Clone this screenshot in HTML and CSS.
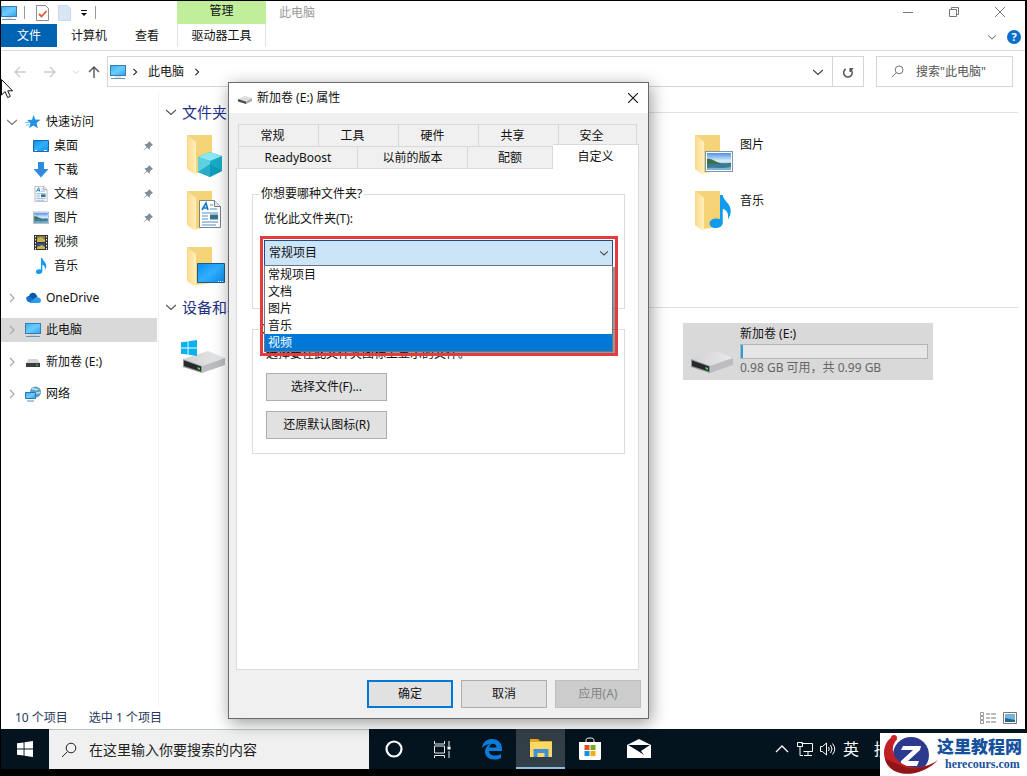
FILE: index.html
```html
<!DOCTYPE html>
<html lang="zh-CN">

<head>
    <meta charset="UTF-8">
    <meta name="viewport" content="width=device-width, initial-scale=1.0">
    <title>此电脑</title>
    <link rel="stylesheet" href="styles.css">
</head>

<body>
    <!-- shared icons -->
    <svg class="defs" width="0" height="0" aria-hidden="true">
        <defs>
            <linearGradient id="g-blue" x1="0" y1="0" x2="1" y2="1">
                <stop offset="0" stop-color="#35b4f5" />
                <stop offset=".5" stop-color="#6ccbff" />
                <stop offset="1" stop-color="#2fa2ee" />
            </linearGradient>
            <linearGradient id="g-desk" x1="0" y1="0" x2="1" y2="1">
                <stop offset="0" stop-color="#0a8df0" />
                <stop offset=".5" stop-color="#31b0ff" />
                <stop offset="1" stop-color="#0a8df0" />
            </linearGradient>
            <linearGradient id="g-fold" x1="0" y1="0" x2="1" y2="1">
                <stop offset="0" stop-color="#f3d583" />
                <stop offset="1" stop-color="#f7d36c" />
            </linearGradient>
            <linearGradient id="g-flap" x1="0" y1="0" x2="1" y2="0">
                <stop offset="0" stop-color="#fbd98a" />
                <stop offset="1" stop-color="#fff0bb" />
            </linearGradient>
            <linearGradient id="g-sky" x1="0" y1="0" x2="0" y2="1">
                <stop offset="0" stop-color="#4f8fe8" />
                <stop offset=".45" stop-color="#d4edfa" />
                <stop offset="1" stop-color="#5a9cc0" />
            </linearGradient>
            <linearGradient id="g-top" x1="0" y1="0" x2="1" y2="0">
                <stop offset="0" stop-color="#d2d2d4" />
                <stop offset="1" stop-color="#e9e9eb" />
            </linearGradient>
        </defs>
        <symbol id="pc" viewBox="0 0 16 16">
            <rect x=".5" y="1.5" width="15" height="10" fill="url(#g-blue)" stroke="#3b7ca8" />
            <path d="M5 13h6" stroke="#b9cbd6" />
            <path d="M1 14.5h14" stroke="#6f94ad" />
        </symbol>
        <symbol id="chev-r" viewBox="0 0 10 10">
            <path d="M3 1l4 4-4 4" fill="none" stroke="currentColor" stroke-width="1.3" />
        </symbol>
        <symbol id="chev-d" viewBox="0 0 10 10">
            <path d="M0 3l5 4.500L10 3" fill="none" stroke="currentColor" stroke-width="1.3" />
        </symbol>
        <symbol id="arrow" viewBox="0 0 14 14">
            <path d="M13 7H2M7 2L2 7l5 5" fill="none" stroke="currentColor" stroke-width="1.4" />
        </symbol>
        <symbol id="search" viewBox="0 0 16 16">
            <circle cx="10" cy="6" r="4.8" fill="none" stroke="currentColor" />
            <path d="M6.6 9.5L1 15" stroke="currentColor" />
        </symbol>
        <symbol id="pin" viewBox="0 0 12 12">
            <path d="M7 1l4 4-1.2.4L8 7.3l-.4 2.4L5.200 7.500 1 11l3.500-4.200L2.300 4.400l2.400-.4 1.900-1.800z" fill="#838d96" />
        </symbol>
        <symbol id="note" viewBox="0 0 16 24">
            <path d="M8 0h2c.5 4.500 5.800 6 5.800 11.500 0 2.500-.8 4.500-2 6.500.6-4-.4-7-3.800-8v10c0 2.500-2.200 4-5 4s-4.600-1.500-4.600-3.500S2.700 17 5.500 17c1 0 1.800.2 2.500.5z" fill="#0f9bf0" />
        </symbol>
        <symbol id="folder" viewBox="0 0 40 42">
            <path d="M1 1h25v36l-17 2z" fill="url(#g-fold)" />
            <path d="M1 1l8 6c1 .7 1 1.500 1 3v31l-2-1-6-4c-.8-.6-1-1-1-2z" fill="url(#g-flap)" />
        </symbol>
        <symbol id="photo" viewBox="0 0 28 22">
            <rect x=".5" y=".5" width="27" height="20" fill="#fff" stroke="#7f96a8" />
            <rect x="2" y="2" width="24" height="17" fill="url(#g-sky)" />
            <path d="M2 8c3-1 6 1 10 3s8 1 14 1v1H2z" fill="#3e7148" />
            <path d="M2 13h24v6H2z" fill="#3d789d" />
            <path d="M2 17c8-1 12 1 24-1v3H2z" fill="#80b4cc" />
        </symbol>
        <symbol id="doc" viewBox="0 0 22 28">
            <path d="M.5.5h15l6 6v21H.5z" fill="#fff" stroke="#7b8288" />
            <path d="M15.500.5v6h6" fill="#e3e8ec" stroke="#7b8288" />
            <path d="M3 10L7 3l2 7M4.500 8h4" fill="none" stroke="#1679c2" stroke-width="1.6" />
            <path d="M11 5h3M11 9h7M3 13h16M3 16h6M3 19h6M3 22h16M3 25h14" stroke="#4c90c4" />
            <path d="M11 14.500h8v5h-8z" fill="#36718f" />
        </symbol>
        <symbol id="drive" viewBox="0 0 42 22">
            <path d="M0 8L25 0l17 7-23 8z" fill="url(#g-top)" />
            <path d="M19 15l23-8v7l-23 8z" fill="#bcbdc0" />
            <path d="M0 8l19 7v7L0 16z" fill="#919396" />
            <path d="M1 9.500l17 6v5L1 15z" fill="#27292b" />
            <path d="M14.500 16l2.500 1v2l-2.500-1z" fill="#3fdc45" />
        </symbol>
        <symbol id="winlogo" viewBox="0 0 16 16">
            <path d="M0 2.300L6.600 1.400v6.100H0zM7.500 1.300L16 0v7.500H7.500zM0 8.400h6.600v6.200L0 13.700zM7.500 8.400H16V16l-8.500-1.300z" fill="currentColor" />
        </symbol>
    </svg>

    <main class="explorer">
        <header class="ribbon">
            <div class="ribbon-left">
                <div class="quick">
                    <svg class="i16"><use href="#pc" /></svg>
                    <i class="sep"></i>
                    <svg class="q-check" viewBox="0 0 13 16"><path d="M.5.5h9l3 3v12H.5z" fill="#fff" stroke="#8b8f94" /><path d="M3 9l2.500 2.500L10.500 6" fill="none" stroke="#e0572f" stroke-width="1.8" /></svg>
                    <svg class="q-doc" viewBox="0 0 13 16"><path d="M.5.5h9l3 3v12H.5z" fill="#d9e6f6" stroke="#c7d9ef" /></svg>
                    <svg class="q-caret" viewBox="0 0 8 8"><path d="M1 1.500h6" stroke="#111" /><path d="M1 4h6L4 7z" fill="#111" /></svg>
                    <i class="sep"></i>
                </div>
                <nav class="tabs">
                    <a class="tab file" href="#">文件</a>
                    <a class="tab" href="#">计算机</a>
                    <a class="tab" href="#">查看</a>
                </nav>
            </div>
            <div class="context">
                <div class="context-title">管理</div>
                <a class="context-tab" href="#">驱动器工具</a>
            </div>
            <div class="ribbon-right">
                <div class="caption">
                    <span class="caption-text">此电脑</span>
                    <button class="win-btn" aria-label="最小化"><svg viewBox="0 0 10 10"><path d="M0 5.500h10" stroke="#777" /></svg></button>
                    <button class="win-btn" aria-label="还原"><svg viewBox="0 0 10 10"><path d="M.5 2.500h7v7h-7zM2.500 2.500v-2h7v7h-2" fill="none" stroke="#777" /></svg></button>
                    <button class="win-btn" aria-label="关闭"><svg viewBox="0 0 10 10"><path d="M0 0l10 10M10 0L0 10" stroke="#777" /></svg></button>
                </div>
                <div class="ribbon-help">
                    <svg class="i8"><use href="#chev-d" /></svg>
                    <button class="help" aria-label="帮助">?</button>
                </div>
            </div>
        </header>

        <div class="address-row">
            <button class="nav-btn back" aria-label="后退"><svg><use href="#arrow" /></svg></button>
            <button class="nav-btn forward" aria-label="前进"><svg><use href="#arrow" /></svg></button>
            <button class="nav-btn recent" aria-label="最近"><svg><use href="#chev-d" /></svg></button>
            <button class="nav-btn up" aria-label="向上"><svg><use href="#arrow" /></svg></button>
            <div class="address">
                <svg class="i18"><use href="#pc" /></svg>
                <svg class="i8"><use href="#chev-r" /></svg>
                <span class="crumb">此电脑</span>
                <svg class="i8"><use href="#chev-r" /></svg>
                <svg class="drop"><use href="#chev-d" /></svg>
                <button class="refresh" aria-label="刷新"><svg viewBox="0 0 12 12"><path d="M8.300 3A4.300 4.300 0 1 1 3.200 3.500M3.800 6V2.800H.800" fill="none" stroke="#555" stroke-width="1.500" transform="matrix(-1 0 0 1 12 0)" /></svg></button>
            </div>
            <div class="search">
                <svg><use href="#search" /></svg>
                <input type="text" aria-label="搜索" placeholder="搜索&quot;此电脑&quot;">
            </div>
        </div>

        <div class="panes">
            <nav class="sidebar">
                <a class="node" href="#"><svg class="tw open"><use href="#chev-d" /></svg><svg class="ni" viewBox="0 0 16 16"><path d="M8.500 1l1.800 4.600 5.200.1-3.900 3.400 1.200 5.100-4.400-2.800-4.400 2.800 1.400-5L2 6l5-.3z" fill="#2192e6" /><path d="M0 8.500h4M1 11h3" stroke="#6fbcf3" /></svg>快速访问</a>
                <a class="node sub" href="#"><svg class="ni" viewBox="0 0 16 16"><path d="M.5 2.500h15v11H.5z" fill="url(#g-desk)" stroke="#1769a8" /><path d="M2 12.500h2M11 12.500h3" stroke="#fff" /></svg>桌面<svg class="pin"><use href="#pin" /></svg></a>
                <a class="node sub" href="#"><svg class="ni" viewBox="0 0 16 16"><path d="M5 0h6v7h4.500L8 15.500.5 7H5z" fill="#2f8be0" /></svg>下载<svg class="pin"><use href="#pin" /></svg></a>
                <a class="node sub" href="#"><svg class="ni"><use href="#doc" /></svg>文档<svg class="pin"><use href="#pin" /></svg></a>
                <a class="node sub" href="#"><svg class="ni"><use href="#photo" /></svg>图片<svg class="pin"><use href="#pin" /></svg></a>
                <a class="node sub" href="#"><svg class="ni" viewBox="0 0 16 16"><path d="M1 1h14v15H1z" fill="#333" /><path d="M4 2h8v6H4z" fill="#8b7e48" /><path d="M4 9h8v6H4z" fill="#3b4b8d" /><path d="M4 5l4-2 4 3v2H4zM4 13l5-2 3 2v2H4z" fill="#c9b648" /><path d="M2.500 2v14M13.500 2v14" stroke="#eee" stroke-dasharray="1.500 1.500" /></svg>视频</a>
                <a class="node sub" href="#"><svg class="ni"><use href="#note" /></svg>音乐</a>
                <a class="node top" href="#"><svg class="tw"><use href="#chev-r" /></svg><svg class="ni" viewBox="0 0 16 16"><path d="M4 6a4 4 0 0 1 7.500-1l1 2L7 10 1 8.500A3 3 0 0 1 4 6z" fill="#0a57a8" /><path d="M2 7.500a4 4 0 0 1 4-.5l6 5H3.500A3 3 0 0 1 2 7.500z" fill="#1273cf" /><path d="M4 13l7-5.500a3.500 3.500 0 0 1 5 3A2.700 2.700 0 0 1 13 13z" fill="#289bea" /></svg>OneDrive</a>
                <a class="node top current" href="#"><svg class="tw"><use href="#chev-r" /></svg><svg class="ni"><use href="#pc" /></svg>此电脑</a>
                <a class="node top" href="#"><svg class="tw"><use href="#chev-r" /></svg><svg class="ni" viewBox="0 0 16 16"><path d="M3.500 5h9L15 9H1z" fill="#d5d5d6" /><path d="M1 9h14v4H1z" fill="#393b3d" /><path d="M11 11h2" stroke="#45dc50" /></svg>新加卷 (E:)</a>
                <a class="node top" href="#"><svg class="tw"><use href="#chev-r" /></svg><svg class="ni" viewBox="0 0 16 16"><circle cx="10.500" cy="6" r="5.500" fill="#5b9fc5" /><path d="M7 3c3-1 3 2 6 0M9 8c2-2 4 0 6-2" stroke="#c3e3ef" fill="none" stroke-width="1.500" /><path d="M.5 6.500h10v6H.5z" fill="url(#g-blue)" stroke="#2878af" /><path d="M2 15h7" stroke="#5a8dac" /></svg>网络</a>
            </nav>

            <section class="content">
                <h2 class="group-title"><svg><use href="#chev-d" /></svg>文件夹</h2>
                <div class="tiles">
                    <div class="tile">
                        <div class="thumb">
                            <svg class="folder"><use href="#folder" /></svg>
                            <svg class="badge cube" viewBox="0 0 26 26"><path d="M13 0l12 4v15l-12 6L1 20V5z" fill="#18adc8" /><path d="M13 0l12 4-12 5L1 5z" fill="#8de7f2" /><path d="M1 5l12 4v16L1 20z" fill="#5ed1e1" /><path d="M1 20l12-8 12 7-12 6z" fill="#0593b5" opacity=".6" /></svg>
                        </div>
                    </div>
                    <div class="tile third">
                        <div class="thumb">
                            <svg class="folder"><use href="#folder" /></svg>
                            <svg class="badge photo"><use href="#photo" /></svg>
                        </div>
                        <div class="tile-text">图片</div>
                    </div>
                    <div class="tile">
                        <div class="thumb">
                            <svg class="folder"><use href="#folder" /></svg>
                            <svg class="badge doc"><use href="#doc" /></svg>
                        </div>
                    </div>
                    <div class="tile third">
                        <div class="thumb">
                            <svg class="folder"><use href="#folder" /></svg>
                            <svg class="badge music"><use href="#note" /></svg>
                        </div>
                        <div class="tile-text">音乐</div>
                    </div>
                    <div class="tile">
                        <div class="thumb">
                            <svg class="folder"><use href="#folder" /></svg>
                            <svg class="badge desk" viewBox="0 0 28 21"><path d="M.5.5h27v19H.5z" fill="url(#g-desk)" stroke="#1b5c8d" /><path d="M21 18.500h6" stroke="#fff" stroke-dasharray="1 1" /></svg>
                        </div>
                    </div>
                </div>
                <h2 class="group-title"><svg><use href="#chev-d" /></svg>设备和驱动器</h2>
                <div class="tiles">
                    <div class="tile">
                        <div class="thumb system">
                            <svg class="drive"><use href="#drive" /></svg>
                            <svg class="badge win"><use href="#winlogo" /></svg>
                        </div>
                    </div>
                    <div class="tile third selected">
                        <div class="thumb system">
                            <svg class="drive"><use href="#drive" /></svg>
                        </div>
                        <div class="tile-text volume">
                            <div>新加卷 (E:)</div>
                            <div class="usage"><div class="used" style="width: 1%"></div></div>
                            <div class="space">0.98 GB 可用，共 0.99 GB</div>
                        </div>
                    </div>
                </div>
            </section>
        </div>

        <footer class="status">
            <span>10 个项目</span>
            <span>选中 1 个项目</span>
            <div class="views">
                <svg viewBox="0 0 16 12"><path d="M.5.5h3v3h-3zM.5 4.500h3v3h-3zM.5 8.500h3v3h-3z" fill="none" stroke="#999" /><path d="M6 2h4M11 2h5M6 6h4M11 6h5M6 10h4M11 10h5" stroke="#777" /></svg>
                <svg class="large" viewBox="0 0 14 12"><path d="M.5.5h13v11H.5z" fill="#fff" stroke="#777" /><path d="M2 2h10v8H2z" fill="#71b4de" /><path d="M2 6l5 1 5 1v2H2z" fill="#286486" /></svg>
            </div>
        </footer>
    </main>

    <section class="dialog" role="dialog" aria-label="新加卷 (E:) 属性">
        <header class="dialog-title">
            <svg class="dialog-icon" viewBox="0 0 14 14"><path d="M0 8l7-3 7 2-6 3z" fill="#dcdcde" /><path d="M0 8l8 2.500V13L0 10.500z" fill="#4a4c4e" /><path d="M8 10.500L14 7v3l-6 3z" fill="#a9aaac" /></svg>
            <span>新加卷 (E:) 属性</span>
            <button class="dialog-close" aria-label="关闭"><svg viewBox="0 0 10 10"><path d="M0 0l10 10M10 0L0 10" stroke="#111" stroke-width="1.100" /></svg></button>
        </header>
        <div class="sheet">
            <div class="sheet-tabs">
                <button>常规</button>
                <button>工具</button>
                <button>硬件</button>
                <button>共享</button>
                <button>安全</button>
            </div>
            <div class="sheet-tabs second">
                <button>ReadyBoost</button>
                <button>以前的版本</button>
                <button>配额</button>
                <button class="active">自定义</button>
            </div>
            <div class="page">
                <fieldset class="group kind">
                    <legend>你想要哪种文件夹?</legend>
                    <div class="fields">
                        <label for="folder-type">优化此文件夹(T):</label>
                        <div class="combo">
                            <select id="folder-type">
                                <option>常规项目</option>
                                <option>文档</option>
                                <option>图片</option>
                                <option>音乐</option>
                                <option>视频</option>
                            </select>
                            <svg class="combo-arrow"><use href="#chev-d" /></svg>
                            <ul class="combo-list">
                                <li>常规项目</li>
                                <li>文档</li>
                                <li>图片</li>
                                <li>音乐</li>
                                <li class="hover">视频</li>
                            </ul>
                            <div class="highlight"></div>
                        </div>
                    </div>
                </fieldset>
                <fieldset class="group icons">
                    <legend>文件夹图标</legend>
                    <div class="fields">
                        <p>选择要在此文件夹图标上显示的文件。</p>
                        <button class="btn wide">选择文件(F)...</button>
                        <button class="btn wide">还原默认图标(R)</button>
                    </div>
                </fieldset>
            </div>
        </div>
        <footer class="dialog-actions">
            <button class="btn default">确定</button>
            <button class="btn">取消</button>
            <button class="btn" disabled>应用(A)</button>
        </footer>
    </section>

    <footer class="taskbar">
        <button class="start" aria-label="开始"><svg><use href="#winlogo" /></svg></button>
        <div class="task-search">
            <svg><use href="#search" /></svg>
            <input type="text" aria-label="搜索" placeholder="在这里输入你要搜索的内容">
        </div>
        <button class="task" aria-label="Cortana"><svg viewBox="0 0 24 24"><circle cx="12" cy="12" r="7.500" fill="none" stroke="#fff" stroke-width="2.200" /></svg></button>
        <button class="task" aria-label="任务视图"><svg viewBox="0 0 24 24"><path d="M3.500 4v3h10V4M3.500 9h10v7h-10zM3.500 21v-2.500h10V21M18 4v5M18 14v7" fill="none" stroke="#e8edf0" /><path d="M16.500 9.500h3v3h-3z" fill="#fff" /></svg></button>
        <button class="task" aria-label="Edge"><svg viewBox="0 0 24 24"><path d="M2 11C3 4.500 7 2 12.200 2 18.500 2 22 6.500 22 12v2H9c.2 3.200 2.800 4.500 6 4.500 2.200 0 4.200-.6 6-1.600v4c-2 1.200-4.300 1.600-6.700 1.600C8.500 22.500 5 19 5 14.500c0-3.600 2-6 5-7.500C7 7.500 4 8.500 2 11zm7.200-.5h7.300c0-2.500-1.400-3.700-3.500-3.700s-3.500 1.400-3.800 3.700z" fill="#0d7bd9" fill-rule="evenodd" /></svg></button>
        <button class="task running" aria-label="文件资源管理器"><svg viewBox="0 0 24 24"><path d="M1 3h8l2 2h12v16H1z" fill="#e4a81b" /><path d="M1 6h22v15H1z" fill="#fed766" /><path d="M4.500 21v-8h15v8h-4v-4h-7v4z" fill="#3f92d4" /></svg></button>
        <button class="task" aria-label="应用商店"><svg viewBox="0 0 24 24"><path d="M8 6V3.500C8 1.500 9.500 1 12 1s4 .5 4 2.500V6" fill="none" stroke="#fff" /><path d="M1 5h22v17l-1 1H2l-1-1z" fill="#fff" /><path d="M6.500 8h5v5h-5z" fill="#e64b26" /><path d="M12.500 8h5v5h-5z" fill="#75ac18" /><path d="M6.500 14h5v5h-5z" fill="#1192df" /><path d="M12.500 14h5v5h-5z" fill="#f3ad12" /></svg></button>
        <button class="task" aria-label="邮件"><svg viewBox="0 0 24 24"><path d="M0 8l12-6 12 6v13H0z" fill="#fff" /><path d="M1 8h22l-9 6 3 4-6-4z" fill="#04141f" /></svg></button>
        <div class="tray">
            <svg viewBox="0 0 16 16"><path d="M2 11l6-6 6 6" fill="none" stroke="#fff" stroke-width="1.300" /></svg>
            <svg viewBox="0 0 16 16"><path d="M4.500 2.500h11v8h-9M11 11v3M7 14.500h8M.5 1.500h5v4h-5zM3 6v8.500h3" fill="none" stroke="#fff" /></svg>
            <svg viewBox="0 0 16 16"><path d="M.5 5.500h2l4-3.500v12l-4-3.500h-2zM8.500 6q1.500 2 0 4M10.500 4q3 4 0 8M12.500 2.500q4.500 5.500 0 11" fill="none" stroke="#fff" /></svg>
            <span>英</span>
            <span>拼</span>
        </div>
    </footer>

    <svg class="cursor" viewBox="0 0 12 20"><path d="M.5.5v15.500l3.600-3.400 2.600 6 2.600-1.200-2.600-5.600h4.800z" fill="#fff" stroke="#111" /></svg>

    <div class="watermark">
        <svg viewBox="0 0 60 43">
            <circle cx="31" cy="22" r="18" fill="#2b3a8e" />
            <path d="M23 13h18l-1 4-12 11h11l-2 5H20l1-5 12-11H21z" fill="#fff" />
            <path d="M12 4C3 10 1 24 9 33c9 10 33 11 49-6-13 10-30 9-38 2C11 22 11 13 17 6z" fill="#c01f26" />
            <path d="M5 26c4 17 31 22 53 1-12 9-28 11-38 5-7-3-11-5-15-6z" fill="#8f1519" />
            <circle cx="14" cy="5" r="3" fill="#cc2228" />
        </svg>
        <div class="watermark-text">
            <strong>这里教程网</strong>
            <span>herecours.com</span>
        </div>
    </div>
</body>

</html>
```

FILE: styles.css
```css
* {
    box-sizing: border-box;
}

body {
    display: flex;
    flex-direction: column;
    position: relative;
    min-height: 100vh;
    margin: 0;
    padding: 1px 2px 7px 1px;
    background: #000;
    color: #111;
    font: 12px/18px "Noto Sans", "Noto Sans CJK SC", sans-serif;
}

a {
    color: inherit;
    text-decoration: none;
}

button,
input,
select {
    margin: 0;
    padding: 0;
    border: none;
    background: none;
    color: inherit;
    font: inherit;
}

button svg {
    display: block;
}

input::placeholder {
    color: inherit;
    opacity: 1;
}

.defs {
    position: absolute;
}

.explorer {
    display: flex;
    flex: 1;
    flex-direction: column;
    background: #fff;
}

/* ribbon */
.ribbon {
    display: flex;
    height: 50px;
    border-bottom: 1px solid #dadbdc;
}

.ribbon-left {
    width: 176px;
}

.quick {
    display: flex;
    align-items: center;
    gap: 11px;
    height: 23px;
}

.i16 {
    width: 16px;
    height: 16px;
    margin-right: -4px;
}

.sep {
    width: 1px;
    height: 13px;
    background: #999;
}

.q-check,
.q-doc {
    width: 13px;
    height: 16px;
    margin-right: -2px;
}

.q-caret {
    width: 8px;
    height: 8px;
    margin-right: -4px;
}

.tabs {
    display: flex;
    gap: 28px;
}

.tab {
    line-height: 24px;
}

.tab.file {
    width: 56px;
    height: 23px;
    margin-right: -14px;
    background: #0063b1;
    color: #fff;
    text-align: center;
}

.context {
    width: 89px;
    text-align: center;
}

.context-title {
    height: 23px;
    background: #c0ee9a;
    line-height: 20px;
}

.context-tab {
    display: block;
    height: 23px;
    border: 1px solid #e2e5e0;
    border-width: 0 1px;
    line-height: 24px;
}

.ribbon-right {
    flex: 1;
}

.caption {
    display: flex;
    height: 23px;
    padding: 0 2px 0 13px;
}

.caption-text {
    flex: 1;
    color: #999;
    line-height: 23px;
}

.win-btn {
    display: grid;
    place-items: center;
    width: 46px;
    height: 21px;
}

.win-btn svg,
.dialog-close svg {
    width: 10px;
    height: 10px;
}

.ribbon-help {
    display: flex;
    align-items: center;
    justify-content: flex-end;
    gap: 6px;
    height: 26px;
    padding-right: 4px;
    color: #888;
}

.help {
    width: 14px;
    height: 14px;
    border-radius: 50%;
    background: #0a6fcb;
    color: #fff;
    font-size: 11px;
    font-weight: bold;
    line-height: 14px;
}

/* address bar */
.address-row {
    display: flex;
    align-items: center;
    height: 41px;
    padding: 0 12px;
}

.nav-btn svg {
    width: 14px;
    height: 14px;
}

.back,
.forward {
    width: 30px;
    color: #ccc;
}

.forward svg {
    transform: rotate(180deg);
}

.recent {
    width: 14px;
    color: #ccc;
}

.recent svg {
    width: 6px;
    height: 6px;
}

.up {
    width: 20px;
    color: #555;
}

.up svg {
    transform: rotate(90deg);
}

.address {
    display: flex;
    flex: 1;
    align-items: center;
    height: 31px;
    padding-left: 2px;
    border: 1px solid #d5d5d5;
}

.i18 {
    width: 16px;
    height: 16px;
}

.i8 {
    width: 8px;
    height: 8px;
    margin: 0 5px;
}

.crumb {
    margin: 0 4px;
}

.drop {
    width: 10px;
    height: 10px;
    margin: 0 9px 0 auto;
    color: #444;
}

.refresh {
    display: grid;
    place-items: center;
    width: 31px;
    height: 29px;
    border-left: 1px solid #d5d5d5;
}

.refresh svg {
    width: 12px;
    height: 12px;
}

.search {
    display: flex;
    align-items: center;
    gap: 12px;
    width: 137px;
    height: 31px;
    margin-left: 12px;
    padding-left: 14px;
    border: 1px solid #d5d5d5;
    color: #555;
}

.search svg {
    width: 13px;
    height: 13px;
    flex: none;
}

.search input,
.task-search input {
    flex: 1;
    min-width: 0;
    outline: none;
}

/* navigation pane */
.panes {
    display: flex;
    flex: 1;
}

.sidebar {
    width: 158px;
    padding-top: 18px;
    border-right: 1px solid #f3f3f3;
}

.node {
    display: flex;
    align-items: center;
    width: 156px;
    height: 24px;
    padding-left: 6px;
}

.node.sub {
    padding-left: 32px;
}

.node.top {
    margin-top: 8px;
}

.node.current {
    background: #d9d9d9;
}

.tw {
    width: 10px;
    height: 10px;
    margin-right: 8px;
    color: #aaa;
}

.tw.open {
    color: #777;
}

.ni {
    width: 16px;
    height: 16px;
    margin-right: 5px;
}

.pin {
    width: 12px;
    height: 12px;
    margin: 0 3px 0 auto;
}

/* content pane */
.content {
    flex: 1;
    min-width: 0;
    padding: 10px 7px 0 7px;
}

.group-title {
    display: flex;
    align-items: center;
    margin: 0;
    color: #1e3287;
    font-size: 15px;
    font-weight: normal;
    line-height: 20px;
}

.group-title::after {
    content: "";
    flex: 1;
    height: 1px;
    margin-left: 8px;
    background: #e2e2e2;
}

.group-title svg {
    width: 10px;
    height: 10px;
    margin-right: 6px;
    color: #555;
}

.tiles {
    display: grid;
    grid-template-columns: repeat(3, 250px);
    column-gap: 4px;
    margin: 6px 0 1px 9px;
}

.tile {
    display: flex;
    grid-column: 1;
    height: 56px;
    padding-left: 8px;
}

.tile.third {
    grid-column: 3;
}

.tile.selected {
    height: 57px;
    background: #d9d9d9;
}

.thumb {
    position: relative;
    width: 49px;
    padding: 6px 0 0 3px;
}

.folder {
    width: 40px;
    height: 42px;
}

.badge {
    position: absolute;
}

.cube {
    left: 14px;
    top: 24px;
    width: 26px;
    height: 26px;
}

.badge.photo {
    left: 14px;
    top: 23px;
    width: 28px;
    height: 22px;
}

.badge.doc {
    left: 16px;
    top: 16px;
    width: 22px;
    height: 28px;
}

.badge.music {
    left: 18px;
    top: 11px;
    width: 22px;
    height: 33px;
}

.desk {
    left: 14px;
    top: 23px;
    width: 28px;
    height: 21px;
}

.thumb.system {
    padding: 28px 0 0 0;
}

.drive {
    width: 42px;
    height: 22px;
}

.badge.win {
    left: -2px;
    top: 17px;
    width: 16px;
    height: 16px;
    color: #08b1ef;
}

.tile-text {
    flex: 1;
    padding-top: 8px;
}

.volume {
    padding: 2px 5px 0 0;
}

.usage {
    height: 15px;
    margin-top: 1px;
    border: 1px solid #b5b5b5;
    background: #e6e6e6;
}

.used {
    height: 13px;
    min-width: 2px;
    background: #26a0da;
}

.space {
    color: #666;
}

.status {
    display: flex;
    align-items: center;
    gap: 21px;
    height: 23px;
    padding: 0 8px 0 14px;
    color: #25385c;
}

.views {
    display: flex;
    gap: 7px;
    margin-left: auto;
}

.views svg {
    width: 16px;
    height: 12px;
}

.views .large {
    width: 14px;
}

/* properties dialog */
.dialog {
    position: absolute;
    left: 228px;
    top: 82px;
    width: 421px;
    border: 1px solid #6a6a6a;
    background: #f0f0f0;
    box-shadow: 2px 4px 16px rgba(0, 0, 0, 0.4);
}

.dialog-title {
    display: flex;
    align-items: center;
    gap: 5px;
    height: 30px;
    padding-left: 9px;
    background: #fff;
}

.dialog-icon {
    width: 14px;
    height: 14px;
}

.dialog-close {
    display: grid;
    place-items: center;
    width: 30px;
    height: 30px;
    margin-left: auto;
}

.sheet {
    padding: 11px 9px 0 7px;
}

.sheet-tabs {
    display: grid;
    grid-template-columns: repeat(4, 80px) 1fr;
    margin: 0 2px;
    border-left: 1px solid #d9d9d9;
}

.sheet-tabs.second {
    grid-template-columns: 119px 110px 85px 1fr;
    margin-right: 0;
}

.sheet-tabs button {
    height: 22px;
    padding-right: 12px;
    border: 1px solid #d9d9d9;
    border-width: 1px 1px 0 0;
    line-height: 20px;
}

.sheet-tabs.second button {
    padding-right: 0;
}

.sheet-tabs .active {
    height: 25px;
    margin: -2px 0 -1px;
    background: #fff;
    z-index: 1;
}

.page {
    min-height: 502px;
    padding: 16px 13px 0 15px;
    border: 1px solid #dcdcdc;
    background: #fff;
}

.group {
    min-width: 0;
    margin: 0 0 11px;
    padding: 0;
    border: 1px solid #dcdcdc;
}

.group legend {
    margin-left: 6px;
    padding: 0 2px;
}

.fields {
    padding: 7px 11px 0;
}

.kind .fields {
    padding-bottom: 42px;
}

.icons .fields {
    display: flex;
    flex-direction: column;
    align-items: flex-start;
    gap: 10px;
    padding: 7px 13px 14px;
}

.fields label {
    display: block;
    margin-bottom: 12px;
}

.fields p {
    margin: 0;
}

.combo {
    position: relative;
}

.combo select {
    display: block;
    width: 100%;
    height: 26px;
    padding-left: 4px;
    border: 1px solid #1b4f7c;
    border-radius: 0;
    background: #cce4f7;
    appearance: none;
    outline: none;
}

.combo-arrow {
    position: absolute;
    right: 5px;
    top: 9px;
    width: 8px;
    height: 8px;
    color: #444;
}

.combo-list {
    position: absolute;
    left: 0;
    right: 0;
    top: 25px;
    margin: 0;
    padding: 0;
    border: 1px solid #6a7681;
    background: #fff;
    box-shadow: 2px 2px 1px rgba(0, 0, 0, 0.4);
    list-style: none;
}

.combo-list li {
    height: 17px;
    padding-left: 3px;
    line-height: 17px;
}

.combo-list .hover {
    background: #0078d7;
    color: #fff;
}

.highlight {
    position: absolute;
    inset: -4px -5px -90px -4px;
    border: 3px solid #e23c3f;
}

.btn {
    width: 86px;
    height: 28px;
    border: 1px solid #adadad;
    background: #e1e1e1;
}

.btn.wide {
    width: 121px;
}

.btn.default {
    border: 2px solid #0078d7;
}

.btn:disabled {
    border-color: #bfbfbf;
    background: #ccc;
    color: #838383;
}

.dialog-actions {
    display: flex;
    justify-content: flex-end;
    gap: 8px;
    padding: 10px 7px;
}

/* taskbar */
.taskbar {
    display: flex;
    height: 40px;
    background: #04141f;
    color: #fff;
}

.start {
    display: grid;
    place-items: center;
    width: 48px;
}

.start svg {
    width: 16px;
    height: 16px;
}

.task-search {
    display: flex;
    align-items: center;
    gap: 12px;
    width: 320px;
    padding-left: 12px;
    border-top: 1px solid #b9c4c0;
    background: #f0f0f0;
    color: #222;
    font-size: 14px;
}

.task-search svg {
    width: 16px;
    height: 16px;
}

.task {
    display: grid;
    place-items: center;
    width: 49px;
}

.task svg {
    width: 24px;
    height: 24px;
}

.running {
    border-bottom: 2px solid #8fbde2;
    background: #333f47;
}

.tray {
    display: flex;
    align-items: center;
    gap: 7px;
    margin: 0 135px 0 auto;
    font-size: 16px;
}

.tray svg {
    width: 16px;
    height: 16px;
}

.tray span + span {
    margin-left: 8px;
}

.cursor {
    position: absolute;
    left: 1px;
    top: 79px;
    width: 12px;
    height: 20px;
}

.watermark {
    display: flex;
    position: absolute;
    right: 0;
    bottom: 0;
    width: 147px;
    height: 43px;
    background: #fff;
    color: #17529d;
}

.watermark svg {
    width: 60px;
    height: 43px;
    margin-right: -3px;
}

.watermark-text {
    display: flex;
    flex-direction: column;
    padding-top: 2px;
}

.watermark strong {
    font: 900 17px/22px "Noto Sans CJK SC", sans-serif;
}

.watermark span {
    padding-left: 8px;
    font: bold 12px/14px "Liberation Serif", serif;
}
```
